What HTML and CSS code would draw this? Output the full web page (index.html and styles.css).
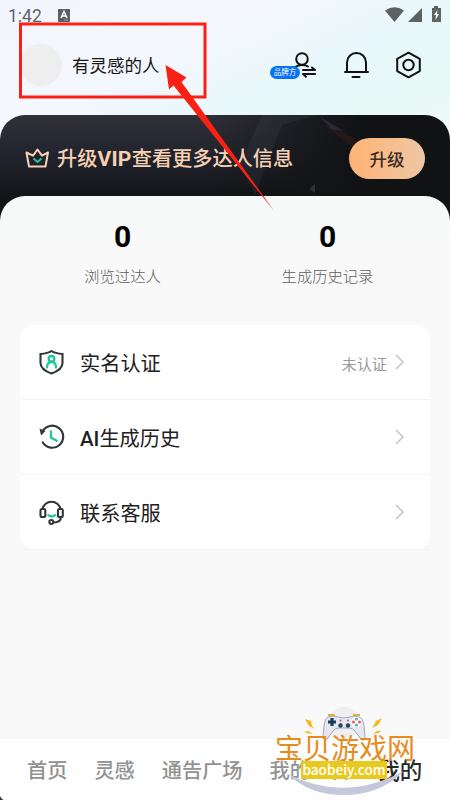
FILE: index.html
```html
<!DOCTYPE html>
<html lang="zh-CN">
<head>
<meta charset="utf-8">
<title>我的</title>
<link rel="stylesheet" href="styles.css">
</head>
<body>
<div class="screen">
  <div class="status">
    <span class="clock">1:42</span>
    <svg class="keyboard" width="12" height="13" viewBox="0 0 12 13"><rect width="12" height="13" rx="1" fill="#5c6064"/><path d="M3 9 6 2.500 9 9M4.200 7h3.600" fill="none" stroke="#fff" stroke-width="1.500"/><path d="M6 11h4" stroke="#999"/></svg>
    <svg class="signals" width="58" height="18" viewBox="0 0 58 18"><g fill="#5c6462"><path d="M1 4.500Q10.500-2 20 4.500L10.500 16Z"/><path d="M38 2v14H24Z"/><path d="M50 0h4v2h3v14h-9V2h2Z"/></g><path d="m53.500 4-3.500 5h2l-.5 5 3.500-6h-2Z" fill="#fff"/></svg>
  </div>
  <header class="profile">
    <div class="avatar"></div>
    <h1 class="name">有灵感的人</h1>
    <div class="actions">
      <div class="switch">
        <svg width="50" height="30" viewBox="0 0 50 30"><g fill="none" stroke="#111" stroke-width="2" stroke-linecap="round" stroke-linejoin="round"><circle cx="32" cy="9" r="5.800"/><path d="M25 17q3-2 7-2t6 1.500"/><path d="M33 20h12l-3-2.500M45 24H33l3 2.700"/></g></svg>
        <span class="badge">品牌方</span>
      </div>
      <svg width="26" height="30" viewBox="0 0 26 30"><g fill="none" stroke="#111" stroke-width="2" stroke-linecap="round"><path d="M3 21V12.500a9.500 9.500 0 0 1 19 0V21M1 22h23M8.500 27h7"/></g></svg>
      <svg width="26" height="30" viewBox="0 0 26 30"><g fill="none" stroke="#111" stroke-width="2" stroke-linejoin="round"><path d="m12.500 2.700 11.300 6.200v12.200l-11.300 6.200L1.200 21.100V8.900Z"/><circle cx="12.500" cy="15" r="5.200"/></g></svg>
    </div>
  </header>
  <section class="vip">
    <svg class="facets" width="450" height="100" viewBox="0 0 450 100"><path d="m240 50 22-50h55l-35 10-27 70Z" fill="#8296aa" opacity=".08"/><path d="m320 2 12 12 12 2-24-14Z" fill="#7777aa" opacity=".2"/><path d="m325 10 27 22 10-2-18-13Z" fill="#8c3824" opacity=".15"/><path d="m309 74 6-5v9Z" fill="#59595d" opacity=".4"/></svg>
    <svg class="crown" width="24" height="20" viewBox="0 0 24 20"><path d="M4 18.500h16.500L23 4.500l-6 3.200L12.500 1.500 8 7.700 1.500 4.500Z" fill="none" stroke="#f7d1b3" stroke-width="2" stroke-linejoin="round"/><path d="m8.500 10.500 4 3.500 4-3.500" fill="none" stroke="#27c79b" stroke-width="2"/></svg>
    <span class="vip-text">升级<b>VIP</b>查看更多达人信息</span>
    <button class="upgrade">升级</button>
  </section>
  <main class="content">
    <section class="stats">
      <div class="stat"><strong>0</strong><span>浏览过达人</span></div>
      <div class="stat"><strong>0</strong><span>生成历史记录</span></div>
    </section>
    <section class="list">
      <div class="row">
        <svg class="row-icon" width="26" height="26" viewBox="0 0 26 26"><path d="M12.500 2c3 2 6.500 2.600 11 3v9c0 5-4 8-11 10.500-7-2.500-11-5.500-11-10.500V5c4.500-.4 8-1 11-3Z" fill="none" stroke="#333638" stroke-width="2.100"/><g fill="none" stroke="#20c79a" stroke-width="2.300" stroke-linecap="round"><circle cx="12.500" cy="9.800" r="2.800"/><path d="M8 18.500c0-3.500 2-5.500 4.500-5.500s4.500 2 4.500 5.500"/></g></svg>
        <span class="label">实名认证</span><span class="state">未认证</span>
        <svg class="chevron" width="10" height="16" viewBox="0 0 10 16"><path d="m1 1 7 7-7 7"/></svg>
      </div>
      <div class="row">
        <svg class="row-icon" width="26" height="26" viewBox="0 0 26 26"><path d="M3.500 7.500A11 11 0 1 1 3.800 18.500" fill="none" stroke="#333638" stroke-width="2.200" stroke-linecap="round"/><path d="m.5 4.500 1.500 7 4.500-4.500Z" fill="#333638"/><path d="M12 7.500v6l5.700 3.200" fill="none" stroke="#20c79a" stroke-width="2.300" stroke-linecap="round"/></svg>
        <span class="label"><b>AI</b>生成历史</span>
        <svg class="chevron" width="10" height="16" viewBox="0 0 10 16"><path d="m1 1 7 7-7 7"/></svg>
      </div>
      <div class="row">
        <svg class="row-icon" width="26" height="26" viewBox="0 0 26 26"><g fill="none" stroke="#333638" stroke-width="2.100"><path d="M3.500 10a9.200 9.200 0 0 1 18 0M22 17.500c0 4-3 6-7.500 6"/><rect x="1.500" y="10" width="4.800" height="8" rx="1.500"/><rect x="19" y="10" width="4.800" height="8" rx="1.500"/><circle cx="12.300" cy="23" r="2"/></g><path d="M8.500 15.500q4.200 4 8.400 0" fill="none" stroke="#20c79a" stroke-width="2.400"/></svg>
        <span class="label">联系客服</span>
        <svg class="chevron" width="10" height="16" viewBox="0 0 10 16"><path d="m1 1 7 7-7 7"/></svg>
      </div>
    </section>
  </main>
  <nav class="tabs"><span>首页</span><span>灵感</span><span>通告广场</span><span>我的通告</span><span class="active">我的</span></nav>
  <svg class="corner" width="5" height="5" viewBox="0 0 5 5"><path d="M0 1q1 3 4 4H0Z" fill="#333"/></svg>

  <div class="watermark">
    <svg class="watermark-art" width="150" height="100" viewBox="0 0 150 100">
      <circle cx="74" cy="23" r="16" fill="#eeefee"/>
      <g fill="#f7b51b"><path d="m35 19 6 2 1 5 3 3-6-3Z"/><path d="m112 18-6 3-2 4-2 3 6-3Z"/><path d="m34 32 4-1 5 3-6-1ZM111 31l-4 0-4 3 5-1Z"/></g>
      <path d="M18 74q56 29 116-3-24 24-60 24-35 0-56-21Z" fill="#c5c7db"/>
      <path d="M58 17q-3 1-4 9l-1 11q1 6 5 1l5-7q2-3 6-3h10q4 0 6 3l5 7q4 5 5-1l-1-11q-1-8-5-9-5-2-9 0-6 2-12 0-5-2-10 0Z" fill="#e5e6ee" stroke="#a1a6bb"/>
      <path d="M58 15h7M83 15h7" stroke="#e7ad3d" stroke-width="2"/>
      <path d="M62 18v8M58 22h8" stroke="#173f5c" stroke-width="3.200"/><circle cx="70.500" cy="25.500" r="2.200" fill="#244660"/><circle cx="78" cy="25.500" r="2.200" fill="#244660"/><circle cx="70.500" cy="20.500" r="1" fill="#d75570"/><circle cx="78" cy="20.500" r="1" fill="#d75570"/><circle cx="86.500" cy="22" r="5.300" fill="#fafafa"/><g fill="#ed5b58"><circle cx="83.500" cy="22" r="1.500"/><circle cx="89.500" cy="22" r="1.500"/></g><circle cx="86.500" cy="19" r="1.500" fill="#5baed5"/><circle cx="86.500" cy="25" r="1.500" fill="#39bca8"/>
    </svg>
    <span class="watermark-name">宝贝游戏网</span><span class="watermark-url">baobeiy.com</span>
  </div>
  <svg class="callout" width="450" height="220" viewBox="0 0 450 220"><rect x="20.500" y="24" width="184.500" height="73" fill="none" stroke="#fa2114" stroke-width="3"/><path d="m165.500 65 21 12.500-5 4.500L274.500 211.500l-101-126-4.500 4Z" fill="#fa2114"/></svg>
</div>
</body>
</html>
```
FILE: styles.css
```css
* { box-sizing: border-box; }
body { margin: 0; font-family: "Noto Sans CJK SC", sans-serif; }
.screen { position: relative; width: 450px; height: 800px; overflow: hidden; display: flex; flex-direction: column; background: linear-gradient(155deg, #f2f5fd 0, #f5f7fe 12%, #e9f8fc 21%, #e7f9f7 28%, #f5faf9 37%); }
.status { display: flex; height: 30px; align-items: flex-start; padding: 6px 8px 0; }
.clock { width: 50px; font: 17.500px/20px Roboto, sans-serif; color: #5f6366; }
.keyboard { margin-top: 3px; }
.signals { margin-left: auto; }
.profile { display: flex; height: 85px; padding: 14px 28px 0 20px; align-items: flex-start; }
.avatar { width: 42px; height: 42px; border-radius: 50%; background: #eee; }
.name { margin: 7px 0 0 10px; font-size: 17.500px; font-weight: 400; line-height: 28px; color: #171717; }
.actions { display: flex; gap: 26px; margin: 6px 0 0 auto; }
.switch { position: relative; width: 48px; height: 30px; }
.badge { position: absolute; left: 0; top: 16px; width: 30px; height: 13px; border-radius: 7px; background: #0871f5; color: white; text-align: center; font-size: 7.500px; line-height: 12px; }
.vip { position: relative; display: flex; align-items: center; height: 111px; flex: none; padding: 0 25px 25px; border-radius: 25px 25px 0 0; background: linear-gradient(90deg, transparent 45%, #111214 80%), linear-gradient(#303039, #20232c 40%, #131416 75%); }
.facets { position: absolute; inset: 0; }
.crown { flex: none; }
.vip-text { position: relative; margin-left: 8px; color: #f7d1b3; font-size: 20.200px; line-height: 30px; font-weight: 500; white-space: nowrap; }
.vip-text b { font-family: Roboto, sans-serif; font-size: 21px; font-weight: 700; letter-spacing: .3px; }
.upgrade { position: relative; margin-left: auto; width: 76px; height: 41px; padding: 0; border: 0; border-radius: 21px; background: linear-gradient(90deg, #ffb373, #efc7a5); color: #3b2b25; font: 500 17.500px/39px "Noto Sans CJK SC", sans-serif; }
.content { position: relative; flex: 1; margin-top: -30px; padding: 22px 20px; border-radius: 25px 25px 0 0; background: linear-gradient(#f5faf8, #f9f9f9 45px); }
.stats { display: flex; height: 107px; }
.stat { flex: 1; display: flex; flex-direction: column; align-items: center; }
.stat strong { font: 700 30px/38px Roboto, sans-serif; }
.stat span { margin-top: 7px; font-size: 15.300px; line-height: 24px; color: #606060; font-weight: 300; }
.list { height: 224px; border-radius: 14px; background: #fff; }
.row { display: flex; height: 75px; padding: 0 25px 0 19px; align-items: center; border-bottom: 1px solid #f4f4f4; }
.label { margin: 2px 0 0 15px; font-size: 20.200px; line-height: 30px; color: #202020; }
.label b { font-family: Roboto, sans-serif; font-weight: 500; font-size: 20.500px; }
.state { margin: 2px 8px 0 auto; font-size: 15.200px; color: #999; }
.chevron { margin-left: auto; fill: none; stroke: #c9c9c9; stroke-width: 1.700; }
.state + .chevron { margin-left: 0; }
.tabs { display: flex; height: 61px; flex: none; gap: 27px; padding: 16px 27px 0; background: #fefefe; font-size: 20.200px; line-height: 30px; color: #929292; font-weight: 500; white-space: nowrap; }
.tabs .active { font-size: 22.500px; line-height: 28px; color: #292929; }
.corner { position: absolute; left: 0; bottom: 0; }
.callout { position: absolute; left: 0; top: 0; }
.watermark { position: absolute; left: 270px; top: 700px; width: 150px; height: 100px; }
.watermark-art { position: absolute; inset: 0; }
.watermark-name { position: absolute; left: 5px; top: 31px; font-size: 28px; line-height: 32px; color: #e78b1e; white-space: nowrap; }
.watermark-url { position: absolute; left: 31px; top: 61px; width: 86px; height: 18px; background: #e9c91e; color: white; text-align: center; font: 500 13.600px/16px "Noto Sans CJK SC", sans-serif; }
```
